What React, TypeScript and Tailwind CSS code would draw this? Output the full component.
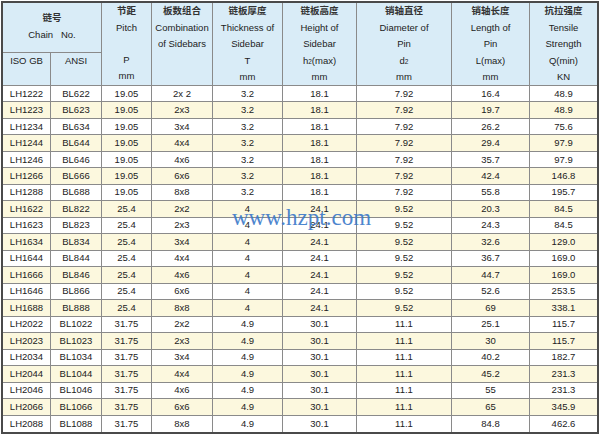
import React from "react";

const rows: string[][] = [
  ["LH1222", "BL622", "19.05", "2x 2", "3.2", "18.1", "7.92", "16.4", "48.9"],
  ["LH1223", "BL623", "19.05", "2x3", "3.2", "18.1", "7.92", "19.7", "48.9"],
  ["LH1234", "BL634", "19.05", "3x4", "3.2", "18.1", "7.92", "26.2", "75.6"],
  ["LH1244", "BL644", "19.05", "4x4", "3.2", "18.1", "7.92", "29.4", "97.9"],
  ["LH1246", "BL646", "19.05", "4x6", "3.2", "18.1", "7.92", "35.7", "97.9"],
  ["LH1266", "BL666", "19.05", "6x6", "3.2", "18.1", "7.92", "42.4", "146.8"],
  ["LH1288", "BL688", "19.05", "8x8", "3.2", "18.1", "7.92", "55.8", "195.7"],
  ["LH1622", "BL822", "25.4", "2x2", "4", "24.1", "9.52", "20.3", "84.5"],
  ["LH1623", "BL823", "25.4", "2x3", "4", "24.1", "9.52", "24.3", "84.5"],
  ["LH1634", "BL834", "25.4", "3x4", "4", "24.1", "9.52", "32.6", "129.0"],
  ["LH1644", "BL844", "25.4", "4x4", "4", "24.1", "9.52", "36.7", "169.0"],
  ["LH1666", "BL846", "25.4", "4x6", "4", "24.1", "9.52", "44.7", "169.0"],
  ["LH1646", "BL866", "25.4", "6x6", "4", "24.1", "9.52", "52.6", "253.5"],
  ["LH1688", "BL888", "25.4", "8x8", "4", "24.1", "9.52", "69", "338.1"],
  ["LH2022", "BL1022", "31.75", "2x2", "4.9", "30.1", "11.1", "25.1", "115.7"],
  ["LH2023", "BL1023", "31.75", "2x3", "4.9", "30.1", "11.1", "30", "115.7"],
  ["LH2034", "BL1034", "31.75", "3x4", "4.9", "30.1", "11.1", "40.2", "182.7"],
  ["LH2044", "BL1044", "31.75", "4x4", "4.9", "30.1", "11.1", "45.2", "231.3"],
  ["LH2046", "BL1046", "31.75", "4x6", "4.9", "30.1", "11.1", "55", "231.3"],
  ["LH2066", "BL1066", "31.75", "6x6", "4.9", "30.1", "11.1", "65", "345.9"],
  ["LH2088", "BL1088", "31.75", "8x8", "4.9", "30.1", "11.1", "84.8", "462.6"],
];

const cols = "grid-cols-[48px_51px_50px_61px_70px_74px_95px_78px_67px]";

function Line({ children, cn }: { children?: React.ReactNode; cn?: boolean }) {
  return (
    <div
      className={
        "h-[16.6px] leading-[16.6px] whitespace-nowrap " +
        (cn ? "text-[9.5px] font-bold text-[#333]" : "text-[9.5px]")
      }
    >
      {children}
    </div>
  );
}

function HeadCell({ lines, last }: { lines: React.ReactNode[]; last?: boolean }) {
  return (
    <div
      className={
        "row-span-2 flex flex-col items-center border-b border-[#8a8a8a] " +
        (last ? "" : "border-r")
      }
    >
      {lines.map((l, i) => (
        <Line key={i} cn={i === 0}>
          {l}
        </Line>
      ))}
    </div>
  );
}

export default function App() {
  return (
    <div
      className="w-[600px] h-[436px] bg-white pt-[1px] pl-[1px]"
      style={{ fontFamily: '"Liberation Sans", Arial, "Noto Sans CJK SC", sans-serif' }}
    >
      <div className="relative w-[598px] h-[433px] border-2 border-[#4a4a4a] text-[#222]">
        {/* header */}
        <div className={"grid h-[83px] grid-rows-[50px_33px] bg-[#d9ecf7] " + cols}>
          <div className="col-span-2 flex flex-col items-center justify-center border-r border-b border-[#8a8a8a] pb-[2px]">
            <Line cn>链号</Line>
            <Line>Chain&nbsp;&nbsp;&nbsp;No.</Line>
          </div>
          <HeadCell lines={["节距", "Pitch", "", "P", "mm"]} />
          <HeadCell lines={["板数组合", "Combination", "of Sidebars", "", ""]} />
          <HeadCell lines={["链板厚度", "Thickness of", "Sidebar", "T", "mm"]} />
          <HeadCell
            lines={[
              "链板高度",
              "Height of",
              "Sidebar",
              <span>
                h<span className="text-[6.5px]">2</span>(max)
              </span>,
              "mm",
            ]}
          />
          <HeadCell
            lines={[
              "销轴直径",
              "Diameter of",
              "Pin",
              <span>
                d<span className="text-[6.5px]">2</span>
              </span>,
              "mm",
            ]}
          />
          <HeadCell lines={["销轴长度", "Length of", "Pin", "L(max)", "mm"]} />
          <HeadCell lines={["抗拉强度", "Tensile", "Strength", "Q(min)", "KN"]} last />
          <div className="col-start-1 row-start-2 flex flex-col items-center border-r border-b border-[#8a8a8a]">
            <Line>ISO GB</Line>
          </div>
          <div className="col-start-2 row-start-2 flex flex-col items-center border-r border-b border-[#8a8a8a]">
            <Line>ANSI</Line>
          </div>
        </div>
        {/* body */}
        <div className={"grid h-[346px] grid-rows-[repeat(21,minmax(0,1fr))] " + cols}>
          {rows.map((r, ri) =>
            r.map((v, ci) => (
              <div
                key={ri + "-" + ci}
                className={
                  "flex items-center justify-center text-[9.5px] border-[#8a8a8a] " +
                  (ri % 2 === 1 ? "bg-[#fcf8de] " : "bg-white ") +
                  (ci < 8 ? "border-r " : "") +
                  (ri < rows.length - 1 ? "border-b" : "")
                }
              >
                {v}
              </div>
            ))
          )}
        </div>
        {/* watermark */}
        <div
          className="absolute left-[229px] top-[203px] text-[23px] leading-none text-[#3b79c9] opacity-90 whitespace-nowrap"
          style={{ fontFamily: '"Liberation Serif", "Times New Roman", serif' }}
        >
          www.hzpt.com
        </div>
      </div>
    </div>
  );
}
